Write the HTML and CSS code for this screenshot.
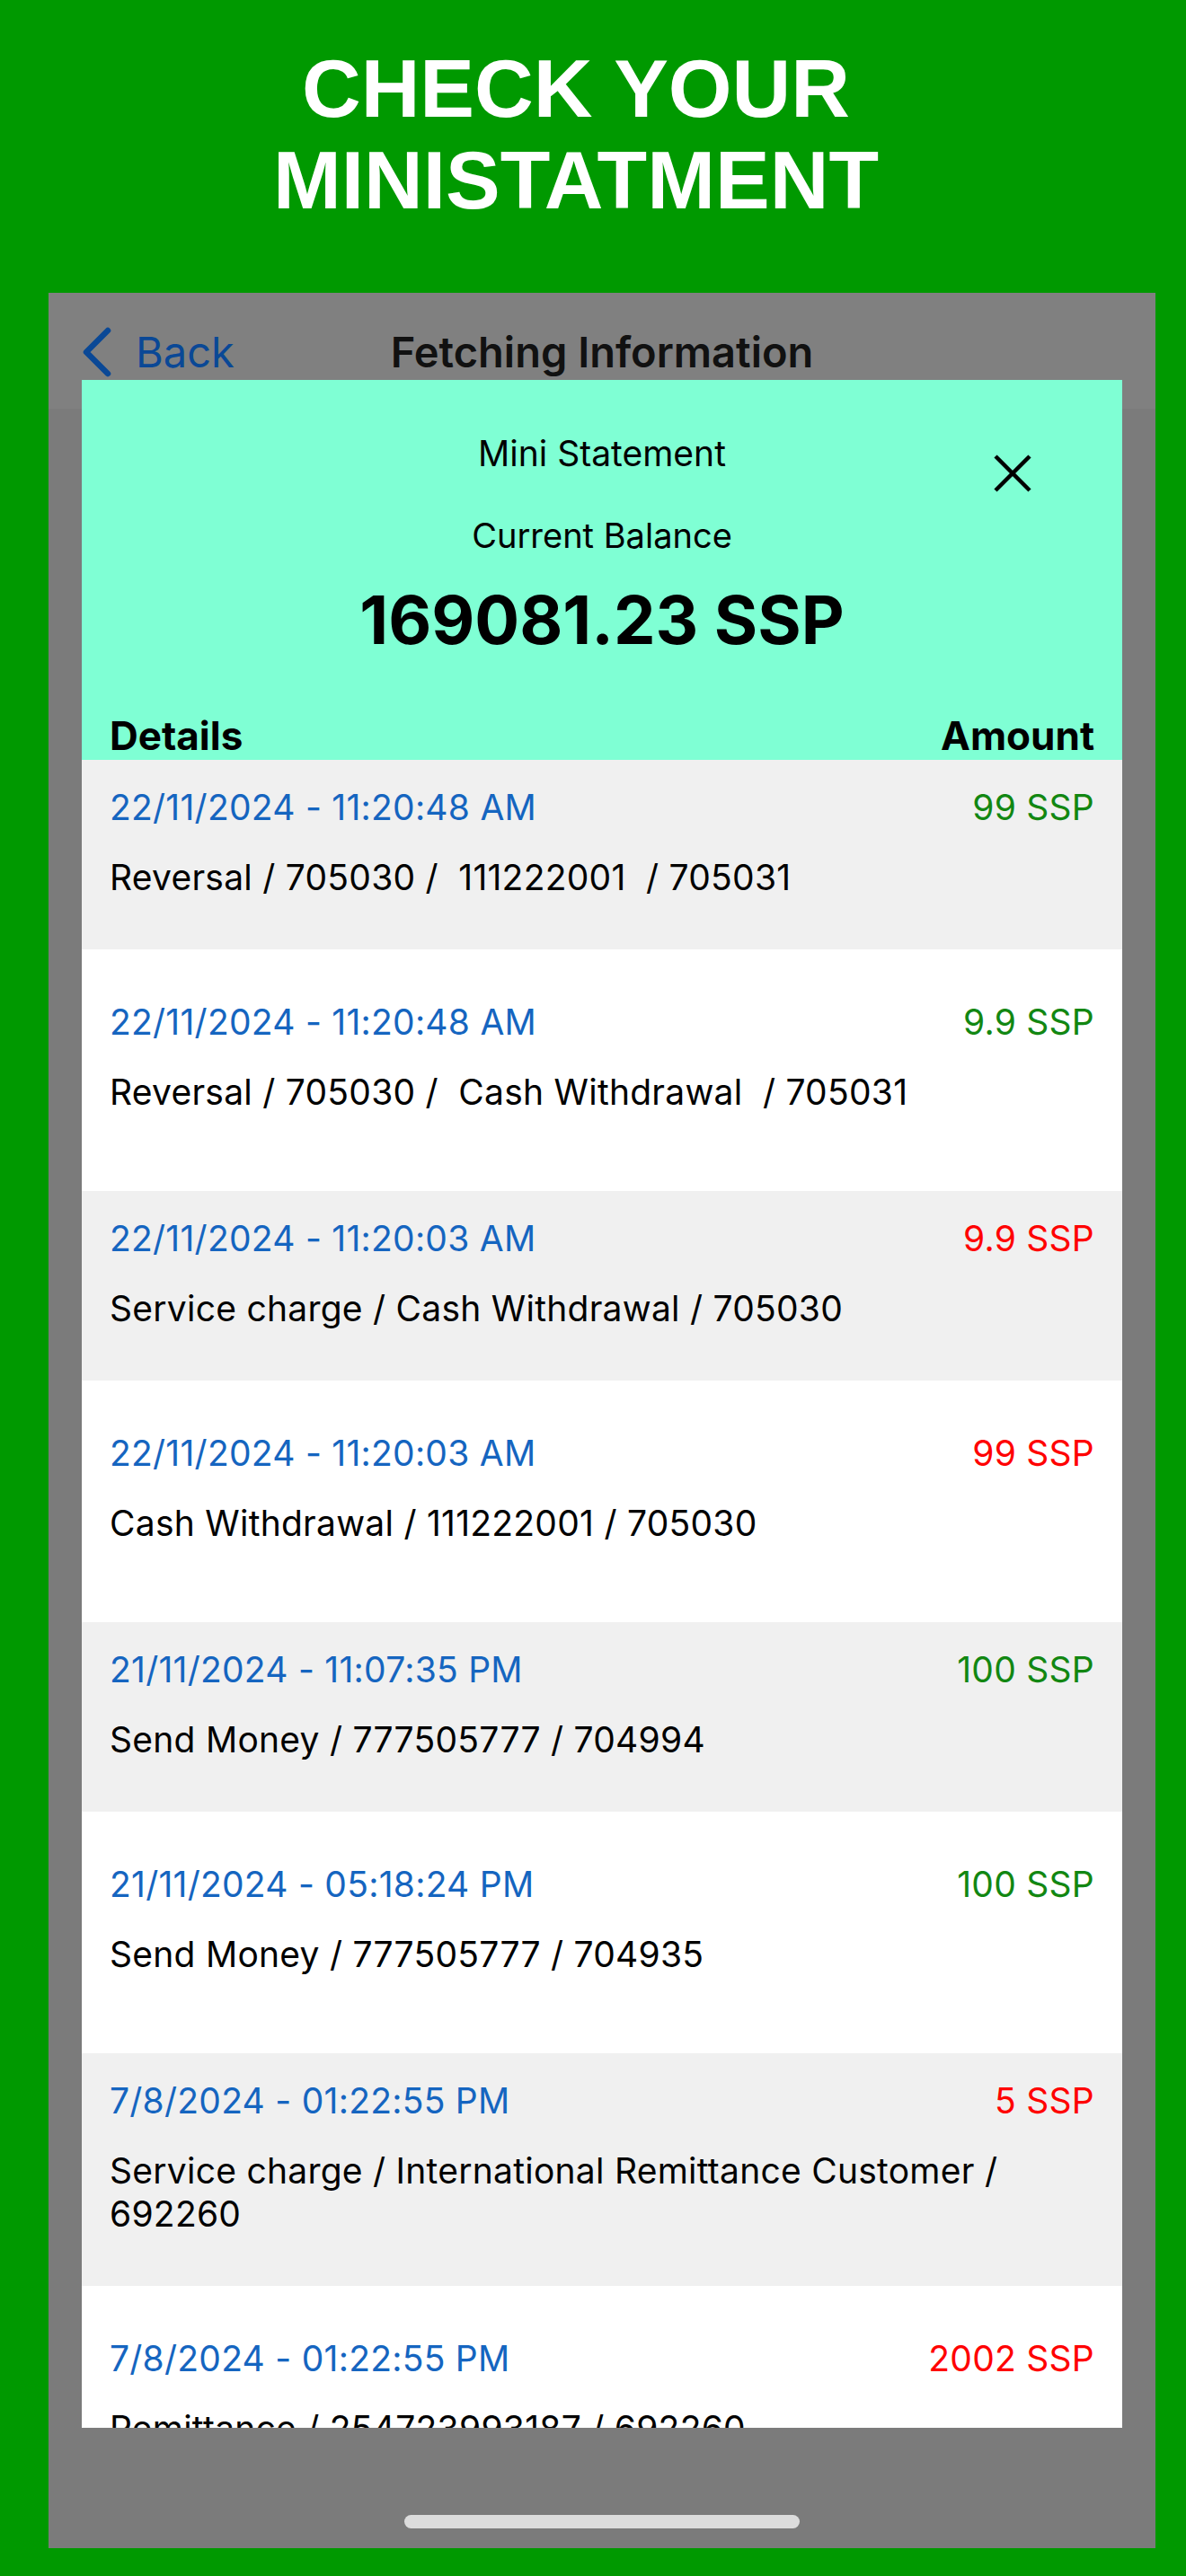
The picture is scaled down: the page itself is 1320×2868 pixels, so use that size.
FILE: index.html
```html
<!DOCTYPE html>
<html lang="en">
  <head>
    <meta charset="UTF-8" />
    <meta name="viewport" content="width=device-width, initial-scale=1.0" />
    <title>Check Your Ministatment</title>
    <link rel="stylesheet" href="styles.css">
  </head>
  <body>
    <header class="promo">
      <h1 class="promo-title">CHECK YOUR<br>MINISTATMENT</h1>
    </header>

    <div class="phone">
      <div class="nav-bar">
        <a class="nav-back">
          <svg class="nav-chevron" viewBox="0 0 40 64" width="40" height="64">
            <path d="M32 8 L8 32 L32 56" />
          </svg>
          <span>Back</span>
        </a>
        <div class="nav-title">Fetching Information</div>
        <div></div>
      </div>

      <!-- Mini statement sheet, shown over the screen -->
      <div class="statement-modal">
        <div class="statement-head">
          <button class="close-btn" aria-label="Close">
            <svg viewBox="0 0 42 42" width="42" height="42">
              <path d="M2 2 L40 40 M40 2 L2 40" />
            </svg>
          </button>
          <div class="statement-label">Mini Statement</div>
          <div class="statement-label balance-label">Current Balance</div>
          <div class="balance">169081.23 SSP</div>
          <div class="columns">
            <span>Details</span>
            <span>Amount</span>
          </div>
        </div>

        <ul class="tx-list">
          <li class="tx">
            <div class="tx-top">
              <span class="tx-date">22/11/2024 - 11:20:48 AM</span>
              <span class="tx-amount credit">99 SSP</span>
            </div>
            <div class="tx-desc">Reversal / 705030 /  111222001  / 705031</div>
          </li>
          <li class="tx tx-white">
            <div class="tx-top">
              <span class="tx-date">22/11/2024 - 11:20:48 AM</span>
              <span class="tx-amount credit">9.9 SSP</span>
            </div>
            <div class="tx-desc">Reversal / 705030 /  Cash Withdrawal  / 705031</div>
          </li>
          <li class="tx">
            <div class="tx-top">
              <span class="tx-date">22/11/2024 - 11:20:03 AM</span>
              <span class="tx-amount debit">9.9 SSP</span>
            </div>
            <div class="tx-desc">Service charge / Cash Withdrawal / 705030</div>
          </li>
          <li class="tx tx-white">
            <div class="tx-top">
              <span class="tx-date">22/11/2024 - 11:20:03 AM</span>
              <span class="tx-amount debit">99 SSP</span>
            </div>
            <div class="tx-desc">Cash Withdrawal / 111222001 / 705030</div>
          </li>
          <li class="tx">
            <div class="tx-top">
              <span class="tx-date">21/11/2024 - 11:07:35 PM</span>
              <span class="tx-amount credit">100 SSP</span>
            </div>
            <div class="tx-desc">Send Money / 777505777 / 704994</div>
          </li>
          <li class="tx tx-white">
            <div class="tx-top">
              <span class="tx-date">21/11/2024 - 05:18:24 PM</span>
              <span class="tx-amount credit">100 SSP</span>
            </div>
            <div class="tx-desc">Send Money / 777505777 / 704935</div>
          </li>
          <li class="tx">
            <div class="tx-top">
              <span class="tx-date">7/8/2024 - 01:22:55 PM</span>
              <span class="tx-amount debit">5 SSP</span>
            </div>
            <div class="tx-desc">Service charge / International Remittance Customer / 692260</div>
          </li>
          <li class="tx tx-white">
            <div class="tx-top">
              <span class="tx-date">7/8/2024 - 01:22:55 PM</span>
              <span class="tx-amount debit">2002 SSP</span>
            </div>
            <div class="tx-desc">Remittance / 254723993187 / 692260</div>
          </li>
        </ul>
      </div>

      <div class="home-indicator"></div>
    </div>
  </body>
</html>
```

FILE: styles.css
```css
* {
  margin: 0;
  padding: 0;
  box-sizing: border-box;
}

body {
  font-family: Inter, "Noto Sans", sans-serif;
  background: #009900;
  color: #000000;
  overflow: hidden;
}

/* Green promo banner */
.promo {
  height: 326px;
  padding: 48px 38px 0 0;
}

.promo-title {
  font-family: "Liberation Sans", Arial, sans-serif;
  font-size: 91px;
  font-weight: 700;
  line-height: 102px;
  color: #ffffff;
  text-align: center;
}

/* Phone screen, dimmed behind the sheet */
.phone {
  position: relative;
  width: 1232px;
  height: 2511px;
  margin-left: 54px;
  background: #7b7b7b;
}

.nav-bar {
  display: grid;
  grid-template-columns: 1fr auto 1fr;
  grid-template-rows: 64px;
  align-items: center;
  height: 129px;
  padding: 34px 34px 0;
  background: #808080;
}

.nav-back {
  display: flex;
  align-items: center;
  gap: 23px;
  font-size: 47px;
  line-height: 56px;
  color: #0a4896;
}

.nav-chevron path {
  fill: none;
  stroke: #0a4896;
  stroke-width: 6.5;
  stroke-linecap: round;
  stroke-linejoin: round;
}

.nav-title {
  font-size: 47px;
  font-weight: 600;
  line-height: 56px;
  color: #111111;
}

/* Statement sheet */
.statement-modal {
  position: absolute;
  top: 97px;
  left: 37px;
  right: 37px;
  bottom: 134px;
  display: flex;
  flex-direction: column;
  background: #ffffff;
  overflow: hidden;
}

.statement-head {
  position: relative;
  padding: 58px 31px 0;
  background: #7fffd4;
  text-align: center;
}

.close-btn {
  position: absolute;
  top: 83px;
  right: 101px;
  width: 42px;
  height: 42px;
  border: 0;
  background: none;
}

.close-btn path {
  stroke: #000000;
  stroke-width: 4.5;
}

.statement-label {
  font-size: 39px;
  line-height: 48px;
}

.balance-label {
  margin-top: 43px;
  font-size: 38px;
}

.balance {
  margin-top: 25px;
  font-size: 74px;
  font-weight: 700;
  line-height: 90px;
}

.columns {
  display: flex;
  justify-content: space-between;
  margin-top: 57px;
  font-size: 44px;
  font-weight: 700;
  line-height: 54px;
}

.tx-list {
  list-style: none;
}

.tx {
  padding: 29px 31px 56px;
  background: #f0f0f0;
  font-size: 39px;
  line-height: 48px;
  letter-spacing: 0.25px;
}

.tx-white {
  padding-top: 57px;
  padding-bottom: 86px;
  background: #ffffff;
}

.tx-top {
  display: flex;
  justify-content: space-between;
}

.tx-date {
  color: #1565c0;
}

.tx-amount.credit {
  color: #128712;
}

.tx-amount.debit {
  color: #ff0000;
}

.tx-desc {
  margin-top: 30px;
  white-space: pre-wrap;
}

.home-indicator {
  position: absolute;
  left: 50%;
  bottom: 22px;
  width: 440px;
  height: 15px;
  margin-left: -220px;
  border-radius: 8px;
  background: #dcdcdc;
}
```
